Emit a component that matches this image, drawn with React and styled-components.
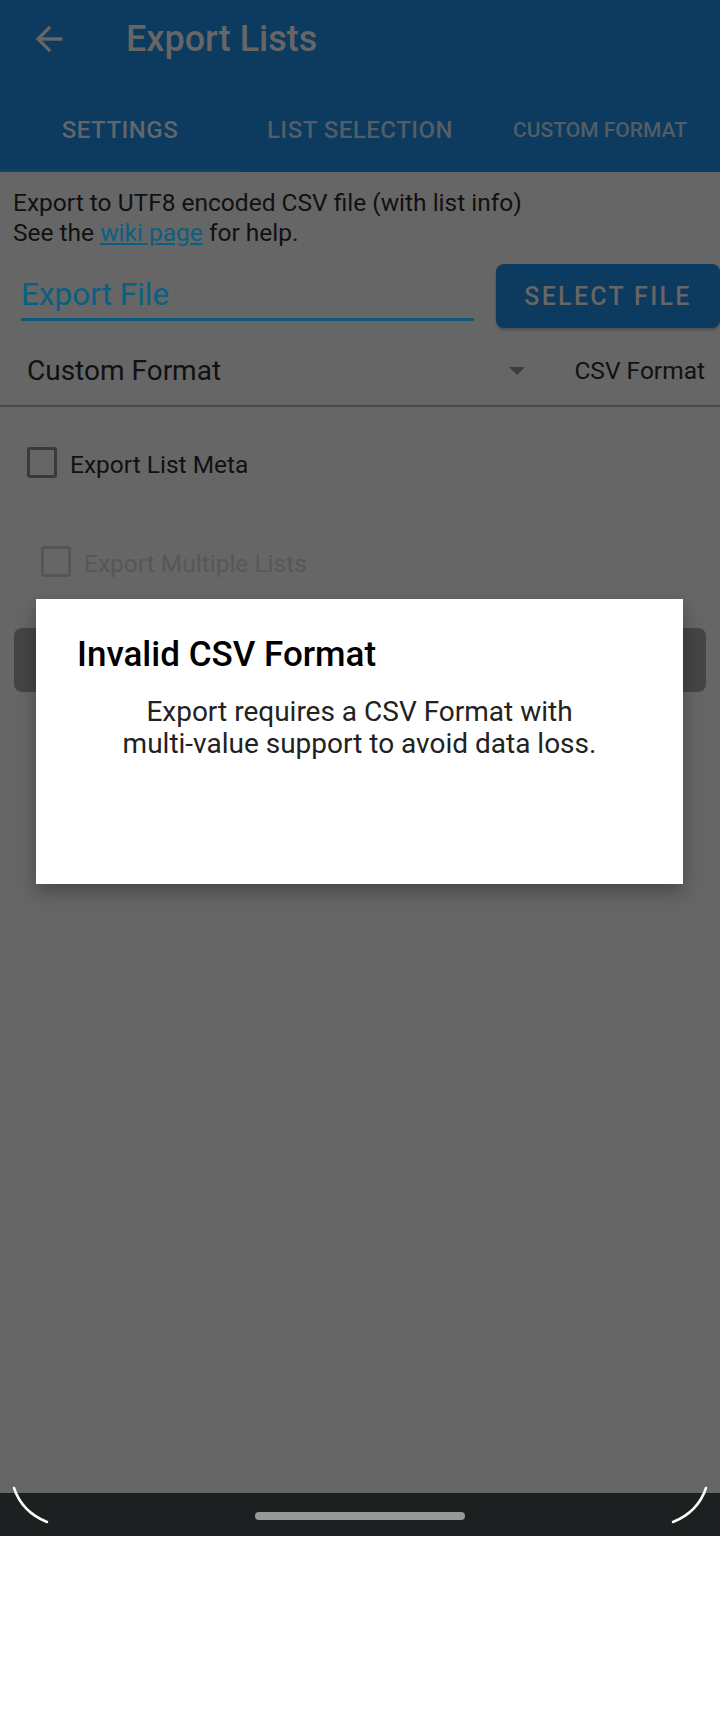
import React from 'react';
import styled, { createGlobalStyle } from 'styled-components';

const GlobalStyle = createGlobalStyle`
  html, body {
    margin: 0;
    padding: 0;
    background: #ffffff;
  }
  * {
    box-sizing: border-box;
  }
`;

const tabs = [
  { label: 'SETTINGS', active: true },
  { label: 'LIST SELECTION' },
  { label: 'CUSTOM FORMAT', small: true },
];

const App = () => {
  return (
    <Page>
      <GlobalStyle />
      <Device>
        <Header>
          <Toolbar>
            <BackIcon viewBox="0 0 24 24">
              <path d="M20 11H7.83l5.59-5.59L12 4l-8 8 8 8 1.41-1.41L7.83 13H20v-2z" />
            </BackIcon>
            <Title>Export Lists</Title>
          </Toolbar>
          <Tabs>
            {tabs.map((tab) => (
              <Tab key={tab.label} $active={tab.active} $small={tab.small}>
                {tab.label}
              </Tab>
            ))}
          </Tabs>
        </Header>

        <Content>
          <Intro>
            Export to UTF8 encoded CSV file (with list info)
            <br />
            See the <WikiLink>wiki page</WikiLink> for help.
          </Intro>

          <FileRow>
            <FileField>Export File</FileField>
            <SelectButton>SELECT FILE</SelectButton>
          </FileRow>

          <SpinnerRow>
            <Spinner>
              <SpinnerText>Custom Format</SpinnerText>
              <Caret />
            </Spinner>
            <SpinnerLabel>CSV Format</SpinnerLabel>
          </SpinnerRow>
          <Divider />

          <CheckRow $indent={27} $top={40}>
            <CheckBox />
            <CheckLabel>Export List Meta</CheckLabel>
          </CheckRow>
          <CheckRow $indent={41} $top={68}>
            <CheckBox $disabled />
            <CheckLabel $disabled>Export Multiple Lists</CheckLabel>
          </CheckRow>

          <ExportButton />
        </Content>

        <NavBar>
          <NavHandle />
        </NavBar>

        <Corners viewBox="0 0 720 1536" preserveAspectRatio="none">
          <path d="M14 1488 Q22 1512 47 1522" />
          <path d="M706 1488 Q698 1512 673 1522" />
        </Corners>

        <Dialog>
          <DialogTitle>Invalid CSV Format</DialogTitle>
          <DialogBody>
            Export requires a CSV Format with
            <br />
            multi-value support to avoid data loss.
          </DialogBody>
        </Dialog>
      </Device>
    </Page>
  );
};

const Page = styled.div`
  width: 720px;
  height: 1712px;
  background: #ffffff;
  font-family: Roboto, 'Noto Sans', sans-serif;
`;

const Device = styled.div`
  position: relative;
  height: 1536px;
  background: #666666;
  display: flex;
  flex-direction: column;
  overflow: hidden;
`;

const Header = styled.header`
  background: #0d3a5f;
  height: 172px;
  display: flex;
  flex-direction: column;
`;

const Toolbar = styled.div`
  height: 78px;
  display: flex;
  align-items: center;
`;

const BackIcon = styled.svg`
  width: 40px;
  height: 40px;
  margin-left: 29px;
  fill: #666666;
  flex: none;
`;

const Title = styled.h1`
  margin: 0 0 0 57px;
  font-size: 36px;
  font-weight: 500;
  color: #666666;
  line-height: 44px;
`;

const Tabs = styled.nav`
  display: flex;
  padding-top: 10px;
`;

const Tab = styled.div`
  flex: 1;
  height: 84px;
  display: flex;
  align-items: center;
  justify-content: center;
  font-size: ${({ $small }) => ($small ? '21px' : '24px')};
  font-weight: 500;
  letter-spacing: ${({ $small }) => ($small ? '0' : '0.5px')};
  color: ${({ $active }) => ($active ? '#60666b' : '#535d66')};
  box-shadow: ${({ $active }) => ($active ? 'inset 0 -3px 0 #0c4663' : 'none')};
`;

const Content = styled.main`
  flex: 1;
  display: flex;
  flex-direction: column;
`;

const Intro = styled.p`
  margin: 0;
  padding: 16px 0 0 13px;
  font-size: 24.5px;
  line-height: 30px;
  color: #111111;
`;

const WikiLink = styled.span`
  color: #0b5f80;
  text-decoration: underline;
`;

const FileRow = styled.div`
  display: flex;
  align-items: flex-start;
  gap: 22px;
  margin-top: 16px;
  padding-left: 21px;
`;

const FileField = styled.div`
  flex: 1;
  margin-top: 13px;
  padding-bottom: 5px;
  font-size: 31.5px;
  line-height: 36px;
  color: #0b5f80;
  border-bottom: 3px solid #0b5a7a;
`;

const SelectButton = styled.div`
  flex: none;
  width: 224px;
  height: 64px;
  border-radius: 8px;
  background: #0d3a5f;
  color: #666666;
  font-size: 25px;
  font-weight: 500;
  letter-spacing: 2.3px;
  display: flex;
  align-items: center;
  justify-content: center;
  box-shadow: 0 2px 3px rgba(0, 0, 0, 0.25);
`;

const SpinnerRow = styled.div`
  height: 77px;
  display: flex;
  align-items: center;
  padding: 26px 15px 17px 27px;
`;

const Spinner = styled.div`
  flex: 1;
  display: flex;
  align-items: center;
`;

const SpinnerText = styled.span`
  flex: 1;
  font-size: 28px;
  line-height: 34px;
  color: #111111;
`;

const Caret = styled.span`
  width: 0;
  height: 0;
  margin-right: 49px;
  border-left: 8px solid transparent;
  border-right: 8px solid transparent;
  border-top: 8px solid #3d3d3d;
`;

const SpinnerLabel = styled.span`
  font-size: 24.5px;
  line-height: 34px;
  color: #111111;
`;

const Divider = styled.hr`
  margin: 0;
  border: none;
  height: 2px;
  background: #4a4a4a;
`;

const CheckRow = styled.label`
  display: flex;
  align-items: center;
  gap: 13px;
  height: 31px;
  margin-top: ${({ $top }) => $top}px;
  padding-left: ${({ $indent }) => $indent}px;
`;

const CheckBox = styled.span`
  width: 30px;
  height: 31px;
  border: 3px solid ${({ $disabled }) => ($disabled ? '#565656' : '#3a3a3a')};
  border-radius: 3px;
  flex: none;
`;

const CheckLabel = styled.span`
  padding-top: 4px;
  font-size: 24.5px;
  line-height: 31px;
  color: ${({ $disabled }) => ($disabled ? '#575757' : '#111111')};
`;

const ExportButton = styled.div`
  height: 64px;
  margin: 51px 14px 0;
  border-radius: 8px;
  background: #454545;
`;

const NavBar = styled.div`
  height: 43px;
  flex: none;
  background: #1d2021;
  display: flex;
  align-items: center;
  justify-content: center;
  padding-top: 3px;
`;

const NavHandle = styled.span`
  width: 210px;
  height: 8px;
  border-radius: 4px;
  background: #979a99;
`;

const Corners = styled.svg`
  position: absolute;
  inset: 0;
  width: 720px;
  height: 1536px;
  pointer-events: none;

  path {
    fill: none;
    stroke: #ffffff;
    stroke-width: 2.5;
    stroke-linecap: round;
  }
`;

const Dialog = styled.section`
  position: absolute;
  top: 599px;
  left: 36px;
  width: 647px;
  height: 285px;
  background: #ffffff;
  padding: 36px 41px 0;
  box-shadow: 0 8px 18px rgba(0, 0, 0, 0.3);
`;

const DialogTitle = styled.h2`
  margin: 0;
  font-size: 35px;
  font-weight: 500;
  line-height: 40px;
  color: #000000;
`;

const DialogBody = styled.p`
  margin: 21px 0 0;
  font-size: 28px;
  line-height: 32px;
  text-align: center;
  color: #222222;
`;

export default App;
